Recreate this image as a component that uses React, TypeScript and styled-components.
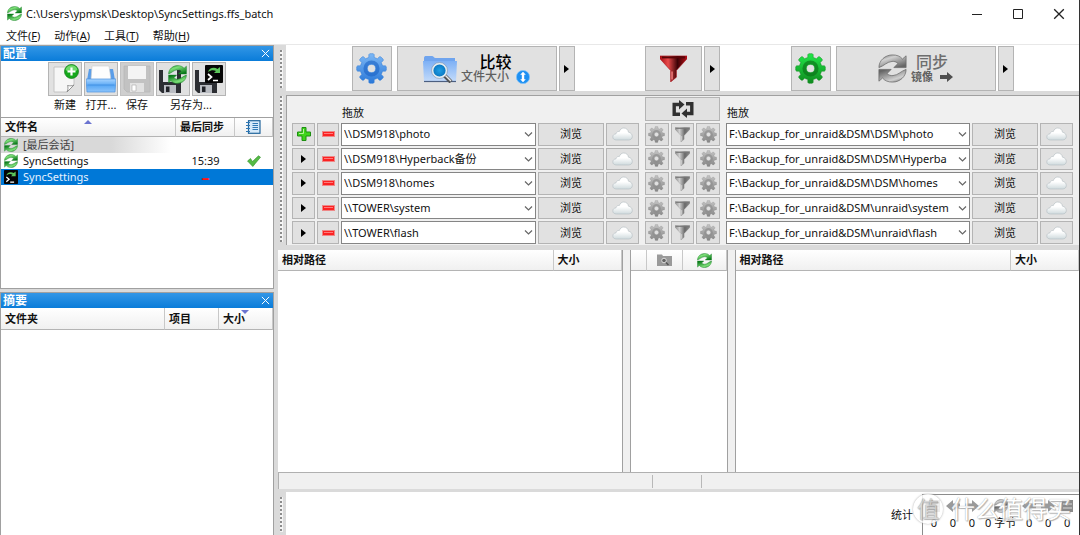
import React from "react";
import styled, { createGlobalStyle, css } from "styled-components";

const Global = createGlobalStyle`
  *, *::before, *::after { box-sizing: border-box; }
  body { margin: 0; overflow: hidden; }
  body, button, select {
    font-family: "Noto Sans", "Noto Sans CJK SC", sans-serif;
    font-size: 11px;
    line-height: 16px;
    color: #111;
  }
  button { margin: 0; padding: 0; cursor: default; }
  svg { display: block; flex: none; }
`;

/* ---------- shell ---------- */

const Window = styled.div`
  display: flex;
  flex-direction: column;
  height: 100vh;
  overflow: hidden;
  background: #fff;
  border-right: 1px solid #333;
  position: relative;
`;

const TitleBar = styled.header`
  display: flex;
  align-items: center;
  height: 27px;
  flex: none;
  padding: 0 2px 0 7px;
  gap: 4px;
`;

const WindowTitle = styled.h1`
  flex: 1;
  margin: 0;
  font-size: 11px;
  font-weight: 400;
  white-space: nowrap;
`;

const CaptionButton = styled.button`
  display: flex;
  align-items: center;
  justify-content: center;
  width: 37px;
  height: 27px;
  border: 0;
  background: none;
`;

const MenuBar = styled.nav`
  display: flex;
  gap: 14px;
  height: 18px;
  flex: none;
  padding: 1px 6px 0;
  border-bottom: 1px solid #e8e8e8;
`;

const MenuButton = styled.button`
  border: 0;
  background: none;
  height: 16px;
`;

const Workspace = styled.div`
  display: flex;
  flex: 1;
  min-height: 0;
  background: #dadada;
  gap: 4px;
`;

const Sidebar = styled.aside`
  display: flex;
  flex-direction: column;
  gap: 3px;
  width: 274px;
  flex: none;
`;

const Panel = styled.section<{ $grow?: boolean }>`
  display: flex;
  flex-direction: column;
  flex: ${(p) => (p.$grow ? "1" : "0 0 244px")};
  background: #fff;
  border: 1px solid #a0a0a0;
  ${(p) => p.$grow && "border-bottom: 0;"}
`;

const PanelTitle = styled.header`
  display: flex;
  align-items: center;
  justify-content: space-between;
  height: 15px;
  flex: none;
  padding: 0 3px 0 2px;
  background: linear-gradient(#3296e6, #0a7cd9);
  color: #fff;
`;

const PanelName = styled.h2`
  margin: 0;
  font-size: 12px;
  line-height: 15px;
  font-weight: 700;
`;

const CloseButton = styled.button`
  border: 0;
  background: none;
  color: #fff;
`;

const ConfigTools = styled.div`
  display: flex;
  justify-content: center;
  gap: 2px;
  height: 57px;
  flex: none;
  padding-top: 1px;
  border-bottom: 1px solid #a0a0a0;
`;

const face = css`
  display: flex;
  align-items: center;
  justify-content: center;
  background: #e1e1e1;
  border: 1px solid #b4b4b4;
`;

const IconFace = styled.span<{ $off?: boolean }>`
  ${face}
  width: 34px;
  height: 34px;
  ${(p) => p.$off && "background: #cfcfcf; border-color: #c2c2c2;"}
`;

const ConfigTool = styled.button`
  display: flex;
  flex-direction: column;
  align-items: center;
  width: 34px;
  border: 0;
  background: none;
  white-space: nowrap;
`;

const ToolText = styled.span`
  line-height: 18px;
  color: #111;
  white-space: nowrap;
`;

const SaveAsGroup = styled.div`
  display: flex;
  flex-direction: column;
  align-items: center;
`;

const ButtonPair = styled.div`
  display: flex;
  gap: 2px;
`;

const PlainButton = styled.button`
  border: 0;
  background: none;
`;

/* ---------- tables ---------- */

const Table = styled.table`
  width: 100%;
  border-collapse: separate;
  border-spacing: 0;
  table-layout: fixed;
`;

const HeadCell = styled.th<{ $w?: number; $h?: number }>`
  position: relative;
  width: ${(p) => (p.$w ? p.$w + "px" : "auto")};
  height: ${(p) => p.$h ?? 21}px;
  padding: 0 4px;
  text-align: left;
  font-weight: 700;
  line-height: 16px;
  white-space: nowrap;
  background: linear-gradient(#fff, #f0f0f0);
  border-right: 1px solid #c8c8c8;
  border-bottom: 1px solid #b4b4b4;
  svg { margin: 0 auto; }
`;

const SortMark = styled.span<{ $x: number; $down?: boolean }>`
  position: absolute;
  top: 2px;
  left: ${(p) => p.$x}px;
  border: 4px solid transparent;
  ${(p) =>
    p.$down
      ? "border-top-color: #6b74d0; border-bottom: 0;"
      : "border-bottom-color: #6b74d0; border-top: 0;"}
`;

const ConfigRow = styled.tr<{ $kind?: "last" | "selected" }>`
  ${(p) =>
    p.$kind === "selected" && "background: #0078d7; color: #e6f2ff;"}
  ${(p) =>
    p.$kind === "last" &&
    "background: linear-gradient(90deg, #d9d9d9 0, #d9d9d9 110px, #fff 170px); color: #444;"}
`;

const ConfigCell = styled.td<{ $center?: boolean }>`
  height: 16px;
  padding: 0 3px;
  text-align: ${(p) => (p.$center ? "center" : "left")};
  svg { margin: 0 auto; }
`;

const ConfigName = styled.span`
  display: flex;
  align-items: center;
  gap: 5px;
  height: 16px;
  svg { margin: 0; }
`;

const Never = styled.span`
  display: block;
  color: #ff1414;
  font-size: 16px;
  line-height: 16px;
  font-weight: 700;
`;

/* ---------- main area ---------- */

const Main = styled.main`
  display: flex;
  flex-direction: column;
  flex: 1;
  min-width: 0;
`;

const Docked = styled.section`
  display: flex;
  flex: none;
`;

const Grip = styled.div`
  width: 8px;
  flex: none;
  padding: 5px 3px 3px 2px;
  &::before {
    content: "";
    display: block;
    height: 100%;
    background: repeating-linear-gradient(#8c8c8c 0 2px, #f4f4f4 2px 4px);
    border-right: 1px solid #f4f4f4;
  }
`;

const ActionBar = styled.div`
  display: grid;
  flex: 1;
  grid-template-columns: minmax(0, 1fr) 75px minmax(0, 1fr);
  column-gap: 5px;
  padding-top: 1px;
  height: 46px;
  background: #fff;
`;

const ActionGroup = styled.div`
  display: flex;
  justify-content: center;
  gap: 2px;
`;

const ActionButton = styled.button<{ $w: number; $after?: number }>`
  ${face}
  width: ${(p) => p.$w}px;
  height: 45px;
  gap: 4px;
  margin-right: ${(p) => p.$after ?? 0}px;
`;

const ActionText = styled.span`
  display: flex;
  flex-direction: column;
`;

const ActionName = styled.span<{ $off?: boolean }>`
  font-size: 16px;
  line-height: 16px;
  text-align: center;
  font-weight: 500;
  color: ${(p) => (p.$off ? "#6e6e6e" : "#000")};
`;

const ActionDetail = styled.span<{ $bold?: boolean }>`
  display: flex;
  align-items: center;
  gap: 7px;
  font-size: ${(p) => (p.$bold ? 11 : 12)}px;
  line-height: 14px;
  font-weight: ${(p) => (p.$bold ? 700 : 500)};
  color: #606060;
`;

const FolderAreaWrap = styled.div`
  display: flex;
  flex: 1;
  min-width: 0;
  padding-top: 4px;
`;

const FolderArea = styled.div`
  display: grid;
  flex: 1;
  min-width: 0;
  grid-template-columns: minmax(0, 1fr) 75px minmax(0, 1fr);
  column-gap: 6px;
  height: 150px;
  padding: 1px 6px 1px 5px;
  background: #f0f0f0;
  border-top: 1px solid #a0a0a0;
  border-left: 1px solid #a0a0a0;
`;

const PairColumn = styled.div`
  display: flex;
  flex-direction: column;
  min-width: 0;
`;

const DropLabel = styled.div<{ $inset?: boolean }>`
  height: 26px;
  padding: 8px 0 0 ${(p) => (p.$inset ? 50 : 1)}px;
`;

const Rows = styled.div`
  display: grid;
  flex: 1;
  grid-template-rows: repeat(5, minmax(0, 1fr));
  gap: 2px;
`;

const Row = styled.div`
  display: flex;
  gap: 2px;
  min-width: 0;
`;

const RowButton = styled.button<{ $w?: number }>`
  ${face}
  ${(p) => (p.$w ? `width: ${p.$w}px; flex: none;` : "flex: 1;")}
`;

const SwapButton = styled.button`
  ${face}
  height: 24px;
  margin-bottom: 2px;
`;

const Combo = styled.div`
  position: relative;
  flex: 1;
  min-width: 0;
  display: flex;
  svg {
    position: absolute;
    right: 3px;
    top: 8px;
    pointer-events: none;
  }
`;

const ComboSelect = styled.select`
  appearance: none;
  width: 100%;
  min-width: 0;
  padding: 0 17px 0 2px;
  border: 1px solid #858585;
  border-radius: 0;
  background: #fff;
  text-overflow: clip;
`;

const Grids = styled.div`
  display: flex;
  flex: 1;
  min-height: 0;
  margin-top: 5px;
  gap: 7px;
  background: #f0f0f0;
`;

const GridPane = styled.div<{ $w?: number }>`
  ${(p) => (p.$w ? `flex: 0 0 ${p.$w}px;` : "flex: 1;")}
  min-width: 0;
  background: #fff;
  border: solid #a0a0a0;
  border-width: 0 1px;
  &:first-child { border-left: 0; }
  &:last-child { border-right: 0; }
`;

const StatusBar = styled.footer`
  display: grid;
  grid-template-columns: 1fr 49px 1fr;
  height: 17px;
  flex: none;
  background: #f0f0f0;
  border-top: 1px solid #b0b0b0;
  border-left: 1px solid #b0b0b0;
  padding: 2px 5px 0 0;
  margin-bottom: 3px;
`;

const StatusCell = styled.span`
  height: 13px;
  & + & { border-left: 1px solid #b8b8b8; }
`;

const StatsBar = styled.div`
  display: flex;
  flex: 1;
  justify-content: flex-end;
  gap: 9px;
  height: 43px;
  background: #fff;
  padding: 2px 0 0;
`;

const StatsLabel = styled.span`
  padding-top: 13px;
`;

const StatsBox = styled.div`
  display: flex;
  gap: 7px;
  width: 157px;
  padding: 4px 7px 0 5px;
  border: solid #8c8c8c;
  border-width: 1px 0 0 1px;
`;

const Stat = styled.div<{ $wide?: boolean }>`
  display: flex;
  flex-direction: column;
  align-items: center;
  gap: 2px;
  width: ${(p) => (p.$wide ? 32 : 12)}px;
  white-space: nowrap;
`;

const Watermark = styled.div`
  position: absolute;
  right: 8px;
  bottom: 11px;
  display: flex;
  align-items: center;
  gap: 8px;
  color: #fff;
  font-size: 24px;
  line-height: 30px;
  text-shadow: 0 0 1px #8a8a8a, 1px 1px 1px #a8a8a8;
  opacity: 0.85;
  pointer-events: none;
`;

const WatermarkSeal = styled.span`
  width: 30px;
  height: 30px;
  border-radius: 50%;
  background: #fff;
  box-shadow: 0 0 2px #999;
  color: #d2d2d2;
  font-size: 22px;
  line-height: 28px;
  text-align: center;
`;

/* ---------- icons ---------- */

const GREEN = ["#7fe07a", "#0b7a1b"];
const GREY = ["#d0d0d0", "#666666"];

function Sync({ size, colors = GREEN }: { size: number; colors?: string[] }) {
  const id = React.useId();
  const arrow =
    "M1 15C1 7 8 1 16 1c5 0 8.500 1.500 11 4.500L31 2v13H17.500l4.500-4.500C20 8.500 18 8 15.500 8.200 9.500 8.700 7 13 1 15Z";
  return (
    <svg width={size} height={size} viewBox="0 0 32 32" aria-hidden="true">
      <defs>
        <linearGradient id={id} x1="0" y1="0" x2="0.7" y2="1">
          <stop offset="0" stopColor={colors[1]} />
          <stop offset="0.35" stopColor={colors[0]} />
          <stop offset="1" stopColor={colors[1]} />
        </linearGradient>
      </defs>
      <g fill={`url(#${id})`} stroke={colors[1]} strokeWidth="0.800">
        <path d={arrow} />
        <path d={arrow} transform="rotate(180 16 16)" />
      </g>
    </svg>
  );
}

const GEAR_PATH = (() => {
  const pts: string[] = [];
  for (let i = 0; i < 8; i++) {
    const a = (i * Math.PI) / 4 - Math.PI / 2;
    [
      [-0.24, 11.8],
      [-0.19, 14.6],
      [-0.12, 15.4],
      [0.12, 15.4],
      [0.19, 14.6],
      [0.24, 11.8],
    ].forEach(([d, r]) =>
      pts.push(`${(16 + r * Math.cos(a + d)).toFixed(2)} ${(16 + r * Math.sin(a + d)).toFixed(2)}`)
    );
  }
  return `M${pts.join("L")}ZM16 11.800a4.200 4.200 0 1 0 0 8.400a4.200 4.200 0 1 0 0-8.400Z`;
})();

interface GearProps {
  size: number;
  from: string;
  to: string;
  ring: string;
  edge?: string;
}

function Gear({ size, from, to, ring, edge }: GearProps) {
  const id = React.useId();
  return (
    <svg width={size} height={size} viewBox="0 0 32 32" aria-hidden="true">
      <defs>
        <linearGradient id={id} x1="0" y1="0" x2="0" y2="1">
          <stop offset="0" stopColor={from} />
          <stop offset="1" stopColor={to} />
        </linearGradient>
      </defs>
      <path
        d={GEAR_PATH}
        fill={`url(#${id})`}
        fillRule="evenodd"
        stroke={edge ?? to}
        strokeWidth="0.500"
        strokeLinejoin="round"
      />
      <circle cx="16" cy="16" r="6.500" fill="none" stroke={ring} strokeWidth="3.600" opacity="0.600" />
    </svg>
  );
}

const Funnel = ({ size, grey }: { size: number; grey?: boolean }) => {
  const id = React.useId();
  const stops = grey
    ? ["#8c8c8c", "#cfcfcf", "#6a6a6a", "#8c8c8c"]
    : ["#a80c14", "#e84a4a", "#3c0206", "#b81018"];
  return (
    <svg width={size} height={size} viewBox="0 0 28 28" aria-hidden="true">
      <defs>
        <linearGradient id={id} x1="0" y1="0" x2="1" y2="0">
          <stop offset="0" stopColor={stops[0]} />
          <stop offset="0.3" stopColor={stops[1]} />
          <stop offset="0.65" stopColor={stops[2]} />
          <stop offset="1" stopColor={stops[3]} />
        </linearGradient>
      </defs>
      <path
        d="M0 1H28V4L17 16V23L11 28V16L0 4Z"
        fill={`url(#${id})`}
        stroke={stops[0]}
        strokeWidth="0.600"
      />
      <path d="M2 2.500H26" stroke={grey ? "#777" : "#5a0508"} strokeWidth="2" />
      <path d="M12.500 17V25.500" stroke={grey ? "#ddd" : "#f08080"} strokeWidth="1.500" />
    </svg>
  );
};

const Play = () => (
  <svg width="5" height="8" viewBox="0 0 5 8" aria-hidden="true">
    <path d="M0 0L5 4L0 8Z" fill="#000" />
  </svg>
);

const Minus = () => (
  <svg width="13" height="6" viewBox="0 0 13 6" aria-hidden="true">
    <rect x="0.500" y="0.500" width="12" height="5" fill="#fb2222" stroke="#e88" />
    <path d="M2 2.500H11" stroke="#ff7a7a" />
  </svg>
);

const Plus = () => (
  <svg width="14" height="14" viewBox="0 0 14 14" aria-hidden="true">
    <path d="M5 0.500H9V5H13.500V9H9V13.500H5V9H0.500V5H5Z" fill="#3fd41c" stroke="#1d8f10" />
    <path d="M6.500 2V6.500H2" fill="none" stroke="#b4f59a" />
  </svg>
);

const Cloud = () => {
  const id = React.useId();
  return (
    <svg width="21" height="14" viewBox="0 0 21 14" aria-hidden="true">
      <defs>
        <linearGradient id={id} x1="0" y1="0" x2="0" y2="1">
          <stop offset="0.4" stopColor="#fff" />
          <stop offset="1" stopColor="#cfdadd" />
        </linearGradient>
      </defs>
      <path
        d="M4.500 13C2 13 .8 11.600 .8 10 .8 8 2.300 7 4 6.800 4.300 5 6 4.200 7.300 4.600 8 2.200 9.800 1 11.800 1c2.500 0 4.300 1.600 4.700 4.200C18.800 5.600 20.300 7.300 20.300 9.400 20.300 11.600 18.700 13 16.500 13Z"
        fill={`url(#${id})`}
        stroke="#b9c2c5"
        strokeWidth="0.700"
      />
    </svg>
  );
};

const Chevron = () => (
  <svg width="9" height="7" viewBox="0 0 9 7" aria-hidden="true">
    <path d="M1 1.500L4.500 5L8 1.500" fill="none" stroke="#666" strokeWidth="1.200" />
  </svg>
);

const Cross = ({ size, color }: { size: number; color: string }) => (
  <svg width={size} height={size} viewBox="0 0 10 10" aria-hidden="true">
    <path d="M1 1L9 9M9 1L1 9" stroke={color} strokeWidth="1.100" />
  </svg>
);

const Swap = () => (
  <svg width="22" height="18" viewBox="0 0 22 18" aria-hidden="true">
    <g fill="none" stroke="#303030" strokeWidth="3.400">
      <path d="M8 14.300H2.200V4.500H7.500" />
      <path d="M14 3.700H19.800V13.500H14.500" />
    </g>
    <path d="M7 0L12.500 4.500L7 9.500Z" fill="#303030" />
    <path d="M15 8.500L9.500 13.500L15 18Z" fill="#303030" />
  </svg>
);

const FolderSearch = () => (
  <svg width="34" height="28" viewBox="0 0 34 28" aria-hidden="true">
    <defs>
      <linearGradient id="folderFill" x1="0" y1="0" x2="0" y2="1">
        <stop offset="0" stopColor="#7db0f5" />
        <stop offset="1" stopColor="#c5dcfa" />
      </linearGradient>
      <radialGradient id="lensFill">
        <stop offset="0" stopColor="#1fa0e6" />
        <stop offset="1" stopColor="#0873bd" />
      </radialGradient>
    </defs>
    <path d="M1 3C1 1.500 2 1 3 1H9C10.500 1 11 3 12.500 3H32V8H1Z" fill="#6fa4ee" />
    <path d="M0 6H34L33 27H1Z" fill="url(#folderFill)" />
    <path d="M1 26.500H33" stroke="#4c5f80" strokeWidth="1.200" />
    <path d="M21 20L28 27" stroke="#555" strokeWidth="4" />
    <path d="M21.500 19.500L28 26" stroke="#e8e8e8" strokeWidth="1.500" />
    <circle cx="16.500" cy="15.500" r="7" fill="url(#lensFill)" stroke="#e3ecf2" strokeWidth="1.800" />
    <circle cx="16.500" cy="15.500" r="8" fill="none" stroke="#7b8896" strokeWidth="0.500" />
  </svg>
);

const UpDown = () => (
  <svg width="14" height="14" viewBox="0 0 14 14" aria-hidden="true">
    <circle cx="7" cy="7" r="6.600" fill="#1e90f2" stroke="#7cc2fa" strokeWidth="0.800" />
    <path d="M7 1.800L9.800 4.800H8.200V9.200H9.800L7 12.200L4.200 9.200H5.800V4.800H4.200Z" fill="#fff" />
  </svg>
);

const RightArrow = () => (
  <svg width="13" height="10" viewBox="0 0 13 10" aria-hidden="true">
    <path d="M0 3H7V0L13 5L7 10V7H0Z" fill="#505050" />
  </svg>
);

const NewDoc = () => (
  <svg width="28" height="30" viewBox="0 0 28 30" aria-hidden="true">
    <path d="M3 3H23V21L16 28H3Z" fill="#f6f6f6" stroke="#c4c4c4" />
    <path d="M23 21L16 28C17.500 25 17 23 16.500 21.500C19 22 21 22 23 21Z" fill="#fff" stroke="#888" strokeWidth="0.900" />
    <circle cx="20.500" cy="7.500" r="7" fill="#16a81c" stroke="#0b7a12" strokeWidth="0.700" />
    <path d="M14.500 6A6.200 6.200 0 0 1 26.500 6C23 8 18 8 14.500 6Z" fill="#6fd96b" />
    <path d="M20.500 3.500V11.500M16.500 7.500H24.500" stroke="#fff" strokeWidth="2.200" />
  </svg>
);

const OpenTray = () => (
  <svg width="30" height="28" viewBox="0 0 30 28" aria-hidden="true">
    <defs>
      <linearGradient id="trayFill" x1="0" y1="0" x2="0" y2="1">
        <stop offset="0" stopColor="#a8d4ff" />
        <stop offset="0.5" stopColor="#5aa8f5" />
        <stop offset="1" stopColor="#8cc4fb" />
      </linearGradient>
    </defs>
    <path d="M3 4H27L29 15H1Z" fill="#5a9de8" />
    <path d="M6 1H23L25 15H5Z" fill="#fdfdfd" stroke="#ccc" strokeWidth="0.600" />
    <path d="M0 14H30L29 27H1Z" fill="url(#trayFill)" stroke="#4a90dd" strokeWidth="0.700" />
    <path d="M1.500 20H28.500" stroke="#3f8de0" strokeWidth="0.800" />
  </svg>
);

const Floppy = ({ faded }: { faded?: boolean }) => (
  <svg width="28" height="28" viewBox="0 0 28 28" aria-hidden="true">
    <path
      d="M1 1H27V27H4L1 24Z"
      fill={faded ? "#c2c2c2" : "#2c2e33"}
      stroke={faded ? "#b8b8b8" : "#15161a"}
      strokeWidth="0.800"
    />
    <path d="M5 1H23V14H5Z" fill={faded ? "#f4f4f4" : "#e4e6ea"} />
    <path d="M7 18H21V27H7Z" fill={faded ? "#e2e2e2" : "#b9bcc2"} />
    <path d="M9 20H13V26H9Z" fill={faded ? "#fff" : "#202228"} stroke={faded ? "#aaa" : "#555"} strokeWidth="0.600" />
  </svg>
);

const SmallFloppy = () => (
  <svg width="28" height="28" viewBox="0 0 28 28" aria-hidden="true">
    <path d="M0 5H22V28H3L0 25Z" fill="#2c2e33" />
    <path d="M4 5H18V17H4Z" fill="#dfe1e5" />
    <path d="M5 20H17V28H5Z" fill="#b9bcc2" />
    <path d="M7 21.500H10.500V27H7Z" fill="#202228" />
  </svg>
);

const Terminal = ({ size }: { size: number }) => (
  <svg width={size} height={size} viewBox="0 0 18 18" aria-hidden="true">
    <rect width="18" height="18" rx="1" fill="#050505" />
    <path d="M3 7C4 3 9 1.500 12.500 4L15 2V8H9L11 6C8.500 4.800 6 5 3 7Z" fill="#5cc65a" />
    <path d="M3 9L6.500 12L3 15M8 15.500H13" fill="none" stroke="#fff" strokeWidth="1.700" />
  </svg>
);

const Stack = styled.span`
  position: relative;
  display: block;
`;

const Overlay = styled.span`
  position: absolute;
  top: 0;
  right: 0;
`;

const SaveGui = () => (
  <Stack>
    <SmallFloppy />
    <Overlay><Sync size={19} /></Overlay>
  </Stack>
);

const SaveBatch = () => (
  <Stack>
    <SmallFloppy />
    <Overlay><Terminal size={18} /></Overlay>
  </Stack>
);

const Check = () => (
  <svg width="14" height="12" viewBox="0 0 14 12" aria-hidden="true">
    <path d="M0.500 6L3.500 3.500L5.500 6.500L11.500 0.800L13.500 2.200L5.800 11.500Z" fill="#55bb45" stroke="#2f8f28" strokeWidth="0.600" />
  </svg>
);

const Notebook = () => (
  <svg width="15" height="14" viewBox="0 0 15 14" aria-hidden="true">
    <rect x="2.500" y="0.700" width="11.500" height="12.600" fill="#d6eafa" stroke="#22659c" strokeWidth="1.200" />
    <path d="M0 2.500H4M0 5.500H4M0 8.500H4M0 11.500H4M6.500 3.500H12M6.500 5.500H12M6.500 7.500H12M6.500 9.500H12" stroke="#2f78b5" />
  </svg>
);

const GreyFolder = () => (
  <svg width="15" height="12" viewBox="0 0 15 12" aria-hidden="true">
    <path d="M0 0.500H5L6 2H15V12H0Z" fill="#9a9a9a" />
    <circle cx="7" cy="6.500" r="2.300" fill="#666" stroke="#ddd" />
    <path d="M9 8.500L11.500 11" stroke="#555" strokeWidth="1.500" />
  </svg>
);

const StatArrow = ({ flip }: { flip?: boolean }) => (
  <svg width="14" height="14" viewBox="0 0 14 14" aria-hidden="true">
    <path
      d="M0 7L7 1V4.500H14V9.500H7V13Z"
      fill="#9a9a9a"
      transform={flip ? "rotate(180 7 7)" : undefined}
    />
  </svg>
);

const StatBlock = () => (
  <svg width="14" height="14" viewBox="0 0 14 14" aria-hidden="true">
    <path d="M2 1H13V13H1Z" fill="#8a8a8a" />
    <path d="M3 5H12M3 9H12" stroke="#d8d8d8" />
  </svg>
);

/* ---------- content ---------- */

const PAIRS = [
  ["\\\\DSM918\\photo", "F:\\Backup_for_unraid&DSM\\DSM\\photo"],
  ["\\\\DSM918\\Hyperback备份", "F:\\Backup_for_unraid&DSM\\DSM\\Hyperba"],
  ["\\\\DSM918\\homes", "F:\\Backup_for_unraid&DSM\\DSM\\homes"],
  ["\\\\TOWER\\system", "F:\\Backup_for_unraid&DSM\\unraid\\system"],
  ["\\\\TOWER\\flash", "F:\\Backup_for_unraid&DSM\\unraid\\flash"],
];

const MENUS = [
  ["文件", "F"],
  ["动作", "A"],
  ["工具", "T"],
  ["帮助", "H"],
];

function FolderCombo({ value, label }: { value: string; label: string }) {
  return (
    <Combo>
      <ComboSelect aria-label={label} defaultValue={value}>
        <option>{value}</option>
      </ComboSelect>
      <Chevron />
    </Combo>
  );
}

const BrowseAndCloud = () => (
  <>
    <RowButton $w={66}>浏览</RowButton>
    <RowButton $w={33} aria-label="云存储"><Cloud /></RowButton>
  </>
);

const GreyGear = () => <Gear size={17} from="#c4c4c4" to="#858585" ring="#8a8a8a" />;

const STATS: { icon: React.ReactNode; value: string; wide?: boolean }[] = [
  { icon: <StatBlock />, value: "0" },
  { icon: <StatArrow />, value: "0" },
  { icon: <StatArrow flip />, value: "0" },
  { icon: <Sync size={14} colors={GREY} />, value: "0 字节", wide: true },
  { icon: <StatArrow />, value: "0" },
  { icon: <StatArrow flip />, value: "0" },
  { icon: <StatBlock />, value: "0" },
];

export default function App() {
  return (
    <Window>
      <Global />
      <TitleBar>
        <Sync size={15} />
        <WindowTitle>C:\Users\ypmsk\Desktop\SyncSettings.ffs_batch</WindowTitle>
        <CaptionButton aria-label="最小化">
          <svg width="10" height="10" viewBox="0 0 10 10"><path d="M0 5.500H10" stroke="#222" /></svg>
        </CaptionButton>
        <CaptionButton aria-label="最大化">
          <svg width="10" height="10" viewBox="0 0 10 10"><path d="M0.500 0.500H9.500V9.500H0.500Z" fill="none" stroke="#222" /></svg>
        </CaptionButton>
        <CaptionButton aria-label="关闭"><Cross size={12} color="#222" /></CaptionButton>
      </TitleBar>
      <MenuBar>
        {MENUS.map(([name, key]) => (
          <MenuButton key={key}>{name}(<u>{key}</u>)</MenuButton>
        ))}
      </MenuBar>

      <Workspace>
        <Sidebar>
          <Panel>
            <PanelTitle>
              <PanelName>配置</PanelName>
              <CloseButton aria-label="关闭配置"><Cross size={9} color="#fff" /></CloseButton>
            </PanelTitle>
            <ConfigTools>
              <ConfigTool><IconFace><NewDoc /></IconFace><ToolText>新建</ToolText></ConfigTool>
              <ConfigTool><IconFace><OpenTray /></IconFace><ToolText>打开...</ToolText></ConfigTool>
              <ConfigTool disabled><IconFace $off><Floppy faded /></IconFace><ToolText>保存</ToolText></ConfigTool>
              <SaveAsGroup role="group" aria-labelledby="save-as">
                <ButtonPair>
                  <PlainButton aria-label="另存为同步配置"><IconFace><SaveGui /></IconFace></PlainButton>
                  <PlainButton aria-label="另存为批处理"><IconFace><SaveBatch /></IconFace></PlainButton>
                </ButtonPair>
                <ToolText id="save-as">另存为...</ToolText>
              </SaveAsGroup>
            </ConfigTools>
            <Table>
              <thead>
                <tr>
                  <HeadCell $h={19}>文件名<SortMark $x={83} /></HeadCell>
                  <HeadCell $h={19} $w={59}>最后同步</HeadCell>
                  <HeadCell $h={19} $w={38} aria-label="日志"><Notebook /></HeadCell>
                </tr>
              </thead>
              <tbody>
                <ConfigRow $kind="last">
                  <ConfigCell><ConfigName><Sync size={14} />[最后会话]</ConfigName></ConfigCell>
                  <ConfigCell />
                  <ConfigCell />
                </ConfigRow>
                <ConfigRow>
                  <ConfigCell><ConfigName><Sync size={14} />SyncSettings</ConfigName></ConfigCell>
                  <ConfigCell $center>15:39</ConfigCell>
                  <ConfigCell><Check /></ConfigCell>
                </ConfigRow>
                <ConfigRow $kind="selected">
                  <ConfigCell><ConfigName><Terminal size={14} />SyncSettings</ConfigName></ConfigCell>
                  <ConfigCell $center><Never>–</Never></ConfigCell>
                  <ConfigCell />
                </ConfigRow>
              </tbody>
            </Table>
          </Panel>

          <Panel $grow>
            <PanelTitle>
              <PanelName>摘要</PanelName>
              <CloseButton aria-label="关闭摘要"><Cross size={9} color="#fff" /></CloseButton>
            </PanelTitle>
            <Table>
              <thead>
                <tr>
                  <HeadCell $h={22}>文件夹</HeadCell>
                  <HeadCell $h={22} $w={54}>项目</HeadCell>
                  <HeadCell $h={22} $w={54}>大小<SortMark $x={22} $down /></HeadCell>
                </tr>
              </thead>
            </Table>
          </Panel>
        </Sidebar>

        <Main>
          <Docked>
            <Grip />
            <ActionBar>
              <ActionGroup>
                <ActionButton $w={40} $after={3} aria-label="比较设置">
                  <Gear size={31} from="#7db8f5" to="#2a78d8" ring="#1b63c4" />
                </ActionButton>
                <ActionButton $w={160}>
                  <FolderSearch />
                  <ActionText>
                    <ActionName>比较</ActionName>
                    <ActionDetail>文件大小<UpDown /></ActionDetail>
                  </ActionText>
                </ActionButton>
                <ActionButton $w={16} aria-label="比较方式"><Play /></ActionButton>
              </ActionGroup>
              <ActionGroup>
                <ActionButton $w={57} aria-label="过滤器"><Funnel size={27} /></ActionButton>
                <ActionButton $w={16} aria-label="过滤器选项"><Play /></ActionButton>
              </ActionGroup>
              <ActionGroup>
                <ActionButton $w={40} $after={3} aria-label="同步设置">
                  <Gear size={31} from="#22e84a" to="#0f8a1e" ring="#0a6a16" />
                </ActionButton>
                <ActionButton $w={160}>
                  <Sync size={29} colors={GREY} />
                  <ActionText>
                    <ActionName $off>同步</ActionName>
                    <ActionDetail $bold>镜像<RightArrow /></ActionDetail>
                  </ActionText>
                </ActionButton>
                <ActionButton $w={16} aria-label="同步方式"><Play /></ActionButton>
              </ActionGroup>
            </ActionBar>
          </Docked>

          <Docked>
            <Grip />
            <FolderAreaWrap>
              <FolderArea>
                <PairColumn>
                  <DropLabel $inset>拖放</DropLabel>
                  <Rows>
                    {PAIRS.map(([left], i) => (
                      <Row key={left}>
                        <RowButton $w={23} aria-label={i ? "选项" : "添加"}>{i ? <Play /> : <Plus />}</RowButton>
                        <RowButton $w={22} aria-label="移除"><Minus /></RowButton>
                        <FolderCombo value={left} label="左侧文件夹" />
                        <BrowseAndCloud />
                      </Row>
                    ))}
                  </Rows>
                </PairColumn>
                <PairColumn>
                  <SwapButton aria-label="交换"><Swap /></SwapButton>
                  <Rows>
                    {PAIRS.map(([left]) => (
                      <Row key={left}>
                        <RowButton aria-label="比较设置"><GreyGear /></RowButton>
                        <RowButton aria-label="过滤器"><Funnel size={15} grey /></RowButton>
                        <RowButton aria-label="同步设置"><GreyGear /></RowButton>
                      </Row>
                    ))}
                  </Rows>
                </PairColumn>
                <PairColumn>
                  <DropLabel>拖放</DropLabel>
                  <Rows>
                    {PAIRS.map(([, right]) => (
                      <Row key={right}>
                        <FolderCombo value={right} label="右侧文件夹" />
                        <BrowseAndCloud />
                      </Row>
                    ))}
                  </Rows>
                </PairColumn>
              </FolderArea>
            </FolderAreaWrap>
          </Docked>

          <Grids>
            <GridPane>
              <Table>
                <thead>
                  <tr><HeadCell>相对路径</HeadCell><HeadCell $w={68}>大小</HeadCell></tr>
                </thead>
              </Table>
            </GridPane>
            <GridPane $w={98}>
              <Table>
                <thead>
                  <tr>
                    <HeadCell $w={16} aria-label="选择" />
                    <HeadCell $w={36} aria-label="比较"><GreyFolder /></HeadCell>
                    <HeadCell aria-label="同步"><Sync size={15} /></HeadCell>
                  </tr>
                </thead>
              </Table>
            </GridPane>
            <GridPane>
              <Table>
                <thead>
                  <tr><HeadCell>相对路径</HeadCell><HeadCell $w={68}>大小</HeadCell></tr>
                </thead>
              </Table>
            </GridPane>
          </Grids>
          <StatusBar><StatusCell /><StatusCell /><StatusCell /></StatusBar>

          <Docked>
            <Grip />
            <StatsBar>
              <StatsLabel>统计</StatsLabel>
              <StatsBox>
                {STATS.map((s, i) => (
                  <Stat key={i} $wide={s.wide}>{s.icon}<span>{s.value}</span></Stat>
                ))}
              </StatsBox>
            </StatsBar>
          </Docked>
        </Main>
      </Workspace>

      <Watermark>
        <WatermarkSeal>值</WatermarkSeal>
        什么值得买
      </Watermark>
    </Window>
  );
}
